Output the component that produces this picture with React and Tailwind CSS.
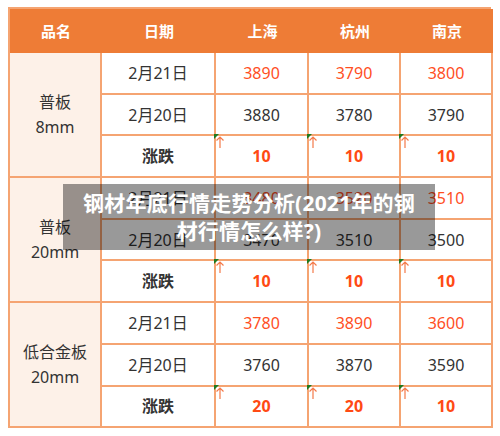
import React from 'react'

const font = { fontFamily: '"Noto Sans", "Noto Sans CJK SC", sans-serif' }

const sections = [
  {
    name: ['普板', '8mm'],
    rows: [
      { date: '2月21日', vals: ['3890', '3790', '3800'], red: true },
      { date: '2月20日', vals: ['3880', '3780', '3790'] },
    ],
    diff: ['10', '10', '10'],
  },
  {
    name: ['普板', '20mm'],
    rows: [
      { date: '2月21日', vals: ['3480', '3520', '3510'], red: true },
      { date: '2月20日', vals: ['3470', '3510', '3500'] },
    ],
    diff: ['10', '10', '10'],
  },
  {
    name: ['低合金板', '20mm'],
    rows: [
      { date: '2月21日', vals: ['3780', '3890', '3600'], red: true },
      { date: '2月20日', vals: ['3760', '3870', '3590'] },
    ],
    diff: ['20', '20', '10'],
  },
]

function UpMark() {
  return (
    <svg className="absolute -left-[2px] -top-[2px]" width="14" height="16" viewBox="0 0 14 16">
      <path d="M0 0 L5 0 L0 5 Z" fill="#1f7a1f" />
      <path d="M6 3 L6 14 M2.5 6.5 L6 3 L9.5 6.5" stroke="#f47a4a" strokeWidth="1.2" fill="none" />
    </svg>
  )
}

const cell = 'flex items-center justify-center border-r-2 border-b-2 border-[#f5a472] text-[16px]'

export default function App() {
  return (
    <div className="relative w-[500px] h-[436px] bg-white" style={font}>
      <div className="pt-[7px] pl-[8px]">
        <div className="grid grid-cols-[92px_114px_93px_92px_92px] w-[483px] border-l-2 border-t-2 border-[#f5a472]">
          {/* header */}
          {['品名', '日期', '上海', '杭州', '南京'].map((h) => (
            <div key={h} className="h-[44px] flex items-center justify-center bg-[#ee7c36] text-white font-bold text-[15px]">
              {h}
            </div>
          ))}

          {sections.map((s, si) => (
            <React.Fragment key={si}>
              <div className="row-span-3 flex flex-col items-center justify-center bg-[#fdf1e8] border-r-2 border-b-2 border-[#f5a472] text-[#333] text-[16px] leading-[25px]">
                <span>{s.name[0]}</span>
                <span>{s.name[1]}</span>
              </div>
              {s.rows.map((r, ri) => (
                <React.Fragment key={ri}>
                  <div className={`${cell} h-[41.7px] text-[#333]`}>{r.date}</div>
                  {r.vals.map((v, vi) => (
                    <div key={vi} className={`${cell} h-[41.7px] ${r.red ? 'text-[#ff4f1f]' : 'text-[#333]'}`}>
                      {v}
                    </div>
                  ))}
                </React.Fragment>
              ))}
              <div className={`${cell} h-[41.7px] text-[#333] font-bold`}>涨跌</div>
              {s.diff.map((d, di) => (
                <div key={di} className={`${cell} relative h-[41.7px] text-[#ff4a14] font-bold`}>
                  <UpMark />
                  {d}
                </div>
              ))}
            </React.Fragment>
          ))}
        </div>
      </div>

      {/* caption overlay */}
      <div className="absolute left-[63px] top-[184px] w-[372px] h-[66px] bg-black/40 flex flex-col items-center justify-center text-white font-bold text-[21px] leading-[28px] tracking-[0.2px]">
        <span>钢材年底行情走势分析(2021年的钢</span>
        <span>材行情怎么样?)</span>
      </div>
    </div>
  )
}
